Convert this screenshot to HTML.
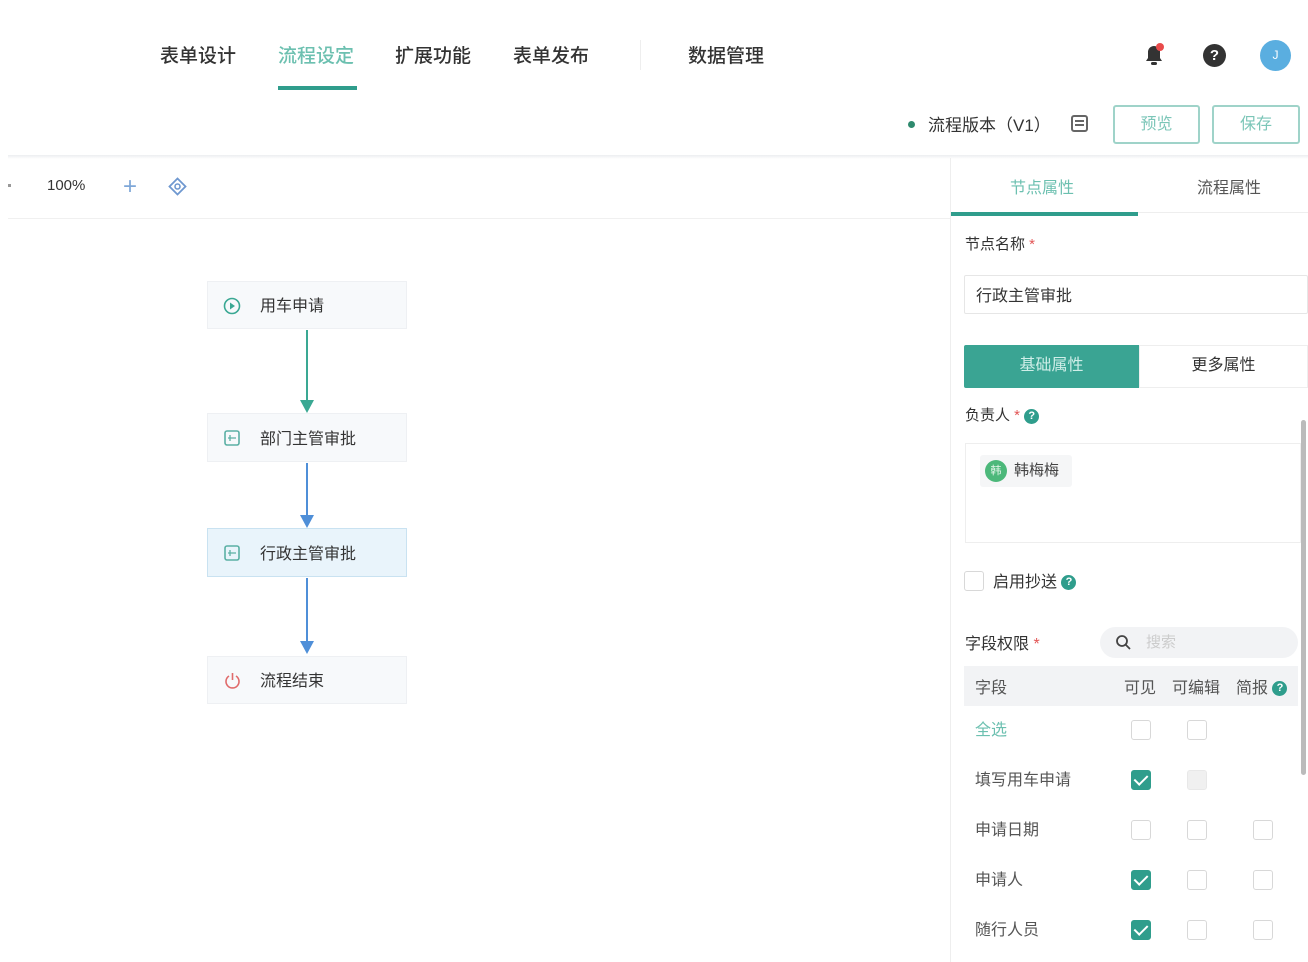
<!DOCTYPE html>
<html><head><meta charset="utf-8"><style>
*{margin:0;padding:0;box-sizing:border-box}
body{width:1308px;height:962px;background:#fff;font-family:"Liberation Sans","Noto Sans CJK SC",sans-serif;color:#333;position:relative;overflow:hidden}
.a{position:absolute}
.nav{font-size:19px;top:41px;color:#333;font-weight:500}
.cb{position:absolute;width:20px;height:20px;border:1.5px solid #d8d8d8;border-radius:3px;background:#fff}
.cb.on{background:#2f9d8c;border-color:#2f9d8c}
.cb.on::after{content:"";position:absolute;left:5px;top:1px;width:6px;height:11px;border:solid #fff;border-width:0 2.5px 2.5px 0;transform:rotate(45deg)}
.node{position:absolute;left:207px;width:200px;background:#f7f9fb;border:1px solid #eef0f3;font-size:16px;color:#333}
.node span{position:absolute;left:52px;top:50%;transform:translateY(-55%)}
.row{position:absolute;left:975px;font-size:16px;color:#555}
.q{display:inline-block;width:15px;height:15px;border-radius:50%;background:#2f9d8c;color:#fff;font-size:11px;text-align:center;line-height:15px;font-weight:bold;vertical-align:middle}
</style></head><body>
<div class="a nav" style="left:160px">表单设计</div>
<div class="a nav" style="left:278px;color:#6cc0b0">流程设定</div>
<div class="a" style="left:278px;top:86px;width:79px;height:4px;background:#2f9d8c"></div>
<div class="a nav" style="left:395px">扩展功能</div>
<div class="a nav" style="left:513px">表单发布</div>
<div class="a" style="left:640px;top:40px;width:1px;height:30px;background:#eee"></div>
<div class="a nav" style="left:688px">数据管理</div>
<svg class="a" style="left:1140px;top:40px" width="28" height="30" viewBox="0 0 28 30"><path d="M6 21h16l-2-3v-6a6 6 0 0 0-12 0v6z" fill="#333"/><rect x="11" y="22" width="6" height="3" rx="1.5" fill="#333"/><circle cx="20" cy="7" r="4" fill="#e94b4b"/></svg>
<div class="a" style="left:1203px;top:44px;width:23px;height:23px;border-radius:50%;background:#333;color:#fff;font-size:15px;font-weight:bold;text-align:center;line-height:23px">?</div>
<div class="a" style="left:1260px;top:40px;width:31px;height:31px;border-radius:50%;background:#5aaee0;color:#fff;font-size:12px;text-align:center;line-height:31px">J</div>
<div class="a" style="left:908px;top:121px;width:7px;height:7px;border-radius:50%;background:#2f8a6e"></div>
<div class="a" style="left:928px;top:111px;font-size:17px;color:#333">流程版本（V1）</div>
<div class="a" style="left:1071px;top:115px;width:17px;height:17px;border:2px solid #666;border-radius:3px"><div style="margin:3px 2px;height:2px;background:#666;box-shadow:0 4px 0 #666"></div></div>
<div class="a" style="left:1113px;top:105px;width:87px;height:39px;border:2px solid #9fd3c9;border-radius:3px;color:#7cc6b8;font-size:16px;text-align:center;line-height:35px">预览</div>
<div class="a" style="left:1212px;top:105px;width:88px;height:39px;border:2px solid #9fd3c9;border-radius:3px;color:#7cc6b8;font-size:16px;text-align:center;line-height:35px">保存</div>
<div class="a" style="left:8px;top:155px;width:1300px;height:4px;background:linear-gradient(#eceef0,#fff)"></div>
<div class="a" style="left:8px;top:184px;width:3px;height:3px;background:#999"></div>
<div class="a" style="left:47px;top:177px;font-size:15px;color:#333">100%</div>
<div class="a" style="left:123px;top:173px;font-size:24px;color:#7fa7d8;line-height:28px">+</div>
<svg class="a" style="left:168px;top:177px" width="19" height="19"><path d="M9.5 1.5L17.5 9.5L9.5 17.5L1.5 9.5Z" fill="none" stroke="#6f98d0" stroke-width="1.8"/><circle cx="9.5" cy="9.5" r="2.5" fill="none" stroke="#6f98d0" stroke-width="1.6"/></svg>
<div class="a" style="left:8px;top:218px;width:942px;height:1px;background:#f0f0f0"></div>
<div class="node" style="top:281px;height:48px"><svg class="a" style="left:15px;top:15px" width="18" height="18"><circle cx="9" cy="9" r="7.5" fill="none" stroke="#3aa893" stroke-width="1.6"/><path d="M7 5.5L12 9L7 12.5Z" fill="#3aa893"/></svg><span>用车申请</span></div>
<div class="a" style="left:306px;top:330px;width:2px;height:72px;background:#3aa893"></div>
<div class="a" style="left:300px;top:400px;border-left:7px solid transparent;border-right:7px solid transparent;border-top:13px solid #3aa893"></div>
<div class="node" style="top:413px;height:49px"><svg class="a" style="left:16px;top:16px" width="16" height="16"><rect x="1" y="1" width="14" height="14" rx="2" fill="none" stroke="#5bb0a4" stroke-width="1.6"/><path d="M4 8h8M6 5v6" stroke="#5bb0a4" stroke-width="1.3"/></svg><span>部门主管审批</span></div>
<div class="a" style="left:306px;top:463px;width:2px;height:54px;background:#4f8fd8"></div>
<div class="a" style="left:300px;top:515px;border-left:7px solid transparent;border-right:7px solid transparent;border-top:13px solid #4f8fd8"></div>
<div class="node" style="top:528px;height:49px;background:#e9f4fb;border-color:#c9e2f1"><svg class="a" style="left:16px;top:16px" width="16" height="16"><rect x="1" y="1" width="14" height="14" rx="2" fill="none" stroke="#5bb0a4" stroke-width="1.6"/><path d="M4 8h8M6 5v6" stroke="#5bb0a4" stroke-width="1.3"/></svg><span>行政主管审批</span></div>
<div class="a" style="left:306px;top:578px;width:2px;height:65px;background:#4f8fd8"></div>
<div class="a" style="left:300px;top:641px;border-left:7px solid transparent;border-right:7px solid transparent;border-top:13px solid #4f8fd8"></div>
<div class="node" style="top:656px;height:48px"><svg class="a" style="left:15px;top:14px" width="19" height="19"><path d="M6 5a6.5 6.5 0 1 0 7 0" fill="none" stroke="#e06b6b" stroke-width="1.6"/><path d="M9.5 2v7" stroke="#e06b6b" stroke-width="1.6"/></svg><span>流程结束</span></div>
<div class="a" style="left:950px;top:158px;width:1px;height:804px;background:#eee"></div>
<div class="a" style="left:1010px;top:174px;font-size:16px;color:#6cc0b0">节点属性</div>
<div class="a" style="left:1197px;top:174px;font-size:16px;color:#555">流程属性</div>
<div class="a" style="left:951px;top:212px;width:357px;height:1px;background:#eee"></div>
<div class="a" style="left:951px;top:212px;width:187px;height:4px;background:#2f9d8c"></div>
<div class="a" style="left:965px;top:233px;font-size:15px;color:#333">节点名称 <span style="color:#e25555">*</span></div>
<div class="a" style="left:964px;top:275px;width:344px;height:39px;border:1px solid #e6e6e6;border-radius:2px;font-size:16px;padding:6px 11px;color:#333">行政主管审批</div>
<div class="a" style="left:964px;top:345px;width:175px;height:43px;background:#3aa493;color:#cfeee8;font-size:16px;text-align:center;line-height:41px;border-radius:2px 0 0 2px">基础属性</div>
<div class="a" style="left:1139px;top:345px;width:169px;height:43px;border:1px solid #eee;color:#333;font-size:16px;text-align:center;line-height:39px">更多属性</div>
<div class="a" style="left:965px;top:404px;font-size:15px;color:#333">负责人 <span style="color:#e25555">*</span> <span class="q">?</span></div>
<div class="a" style="left:965px;top:443px;width:336px;height:100px;border:1px solid #eee"></div>
<div class="a" style="left:980px;top:455px;width:92px;height:32px;background:#f5f6f7;border-radius:3px"></div>
<div class="a" style="left:985px;top:460px;width:22px;height:22px;border-radius:50%;background:#4cb87a;color:#e5f6ea;font-size:11px;text-align:center;line-height:22px">韩</div>
<div class="a" style="left:1014px;top:459px;font-size:15px;color:#444">韩梅梅</div>
<div class="a" style="left:1301px;top:420px;width:5px;height:355px;background:#bbb;border-radius:3px"></div>
<div class="cb" style="left:964px;top:571px"></div>
<div class="a" style="left:993px;top:568px;font-size:16px;color:#333">启用抄送 <span class="q">?</span></div>
<div class="a" style="left:965px;top:630px;font-size:16px;color:#333">字段权限 <span style="color:#e25555">*</span></div>
<div class="a" style="left:1100px;top:627px;width:198px;height:31px;background:#f2f3f5;border-radius:16px"></div>
<svg class="a" style="left:1115px;top:634px" width="17" height="17"><circle cx="7" cy="7" r="5" fill="none" stroke="#444" stroke-width="1.8"/><path d="M11 11l4 4" stroke="#444" stroke-width="1.8"/></svg>
<div class="a" style="left:1146px;top:631px;font-size:15px;color:#ccc">搜索</div>
<div class="a" style="left:964px;top:666px;width:334px;height:40px;background:#f2f3f5"></div>
<div class="row" style="top:674px">字段</div>
<div class="a" style="left:1124px;top:674px;font-size:16px;color:#555">可见</div>
<div class="a" style="left:1172px;top:674px;font-size:16px;color:#555">可编辑</div>
<div class="a" style="left:1236px;top:674px;font-size:16px;color:#555">简报 <span class="q">?</span></div>
<div class="row" style="top:716px;color:#6cc0b0">全选</div>
<div class="cb" style="left:1131px;top:720px"></div><div class="cb" style="left:1187px;top:720px"></div>
<div class="row" style="top:766px">填写用车申请</div>
<div class="cb on" style="left:1131px;top:770px"></div><div class="cb" style="left:1187px;top:770px;background:#f0f0f0;border-color:#e8e8e8"></div>
<div class="row" style="top:816px">申请日期</div>
<div class="cb" style="left:1131px;top:820px"></div><div class="cb" style="left:1187px;top:820px"></div><div class="cb" style="left:1253px;top:820px"></div>
<div class="row" style="top:866px">申请人</div>
<div class="cb on" style="left:1131px;top:870px"></div><div class="cb" style="left:1187px;top:870px"></div><div class="cb" style="left:1253px;top:870px"></div>
<div class="row" style="top:916px">随行人员</div>
<div class="cb on" style="left:1131px;top:920px"></div><div class="cb" style="left:1187px;top:920px"></div><div class="cb" style="left:1253px;top:920px"></div>
</body></html>
